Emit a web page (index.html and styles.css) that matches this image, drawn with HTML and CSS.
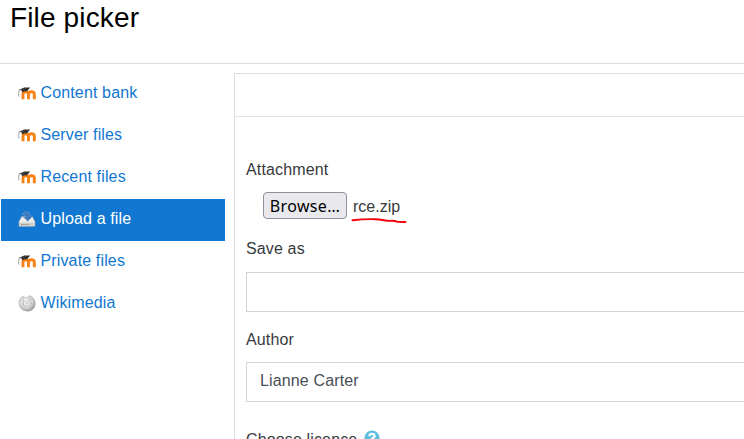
FILE: index.html
```html
<!DOCTYPE html>
<html lang="en">
<head>
<meta charset="utf-8">
<title>File picker</title>
<link rel="stylesheet" href="styles.css">
</head>
<body>
<svg width="0" height="0" class="defs" aria-hidden="true">
  <symbol id="moodle" viewBox="0 0 18 14">
    <path d="M5 13.300V8.200Q5 5.800 7.700 5.800T10.500 8.200V13.300M10.500 8.200Q10.500 5.800 13.500 5.800T16.300 8.200V13.300" fill="none" stroke="#f98012" stroke-width="2.900"/>
    <path d="M1 3.700 6.200 1.600 12.200 1.400 8.900 5.600Q6.200 4.700 4.200 6.600L3.400 4.300Z" fill="#333"/>
    <path d="M5.500 2.800 1.100 4.200Q.4 7 .8 10.500" fill="none" stroke="#666" stroke-width=".6"/>
  </symbol>
</svg>
<header class="header"><h1 class="title">File picker</h1></header>
<main class="picker">
  <nav class="repos">
    <a class="repo"><svg class="icon"><use href="#moodle"/></svg><span>Content bank</span></a>
    <a class="repo"><svg class="icon"><use href="#moodle"/></svg><span>Server files</span></a>
    <a class="repo"><svg class="icon"><use href="#moodle"/></svg><span>Recent files</span></a>
    <a class="repo active"><svg class="icon upload" viewBox="0 0 18 18">
      <path d="M3.800 6.500h10.400l2.700 5v4.800H1v-4.800Z" fill="#eeeeec" stroke="#a5aaa3" stroke-width=".6"/>
      <path d="M1.300 12.500h15.300v3.600H1.300Z" fill="#cfd1cc"/>
      <path d="M3 14.500h8.500" stroke="#888a85" stroke-width="1" stroke-dasharray="1 .7"/>
      <path d="M4.300 4.500Q5 1.500 8.500 1.700 12.200 2.100 12.300 6h2.500L9.800 11.300 5.200 6.700h2.800Q7.800 4 4.300 4.500Z" fill="#3f78bd" stroke="#6c9bd0" stroke-width=".6"/>
    </svg><span>Upload a file</span></a>
    <a class="repo"><svg class="icon"><use href="#moodle"/></svg><span>Private files</span></a>
    <a class="repo"><svg class="icon globe" viewBox="0 0 18 18">
      <defs><radialGradient id="ball" cx=".42" cy=".38" r=".65"><stop offset="0" stop-color="#f5f5f5"/><stop offset=".65" stop-color="#d5d5d5"/><stop offset="1" stop-color="#8c8c8c"/></radialGradient></defs>
      <path d="M5.500 2Q6 4 8 3.500 9.500 4 11 1.600 14 2 16 5 18 9 16.800 12.500 14.500 17.200 9.500 17.200 4 17 1.600 12.500-.5 7 3 3.500Z" fill="url(#ball)" stroke="#aaa" stroke-width=".5"/>
      <path d="M1.500 7Q4 5.500 6 7t4-.6 6.500.2M2 12Q5 10 7.500 12t4.500-.3 4.500.5M5.500 3Q4.500 9 7 16.500M11 2.500Q13.500 9 11.500 16.500" fill="none" stroke="#bdbdbd" stroke-width=".6"/>
      <path d="M4.500 8.500 5.600 10.500M9 8v2M13 8.500l1 1.500" stroke="#999" stroke-width=".6"/>
    </svg><span>Wikimedia</span></a>
  </nav>
  <section class="panel">
    <div class="toolbar"></div>
    <form class="form">
      <label class="label">Attachment</label>
      <div class="file">
        <button class="browse" type="button">Browse…</button>
        <span class="filename">rce.zip<svg class="mark" viewBox="0 0 60 10"><path d="M1.500 4.200Q12 3 24 3.200C32 3.500 34 5 39 4.900Q43 4.400 46 5.700L54.500 6" fill="none" stroke="#f5000c" stroke-width="1.900" stroke-linecap="round"/></svg></span>
      </div>
      <label class="label save">Save as</label>
      <input class="field" type="text">
      <label class="label author">Author</label>
      <input class="field named" type="text" value="Lianne Carter">
      <div class="label licence"><span>Choose licence</span><svg class="help" viewBox="0 0 16 16"><circle cx="8" cy="8" r="7.600" fill="#5bc0de"/><path d="M5.300 6.100Q5.600 3.800 8 3.800T10.600 6.100Q10.600 7.300 9 8T8 9.600" fill="none" stroke="#fff" stroke-width="2.200"/><path d="M7 11h2v2H7Z" fill="#fff"/></svg></div>
    </form>
  </section>
</main>
</body>
</html>
```
FILE: styles.css
```css
* { box-sizing: border-box; }
html, body { height: 100%; }
body {
  margin: 0;
  display: flex;
  flex-direction: column;
  overflow: hidden;
  background: #fff;
  color: #373a3c;
  font: 16px/24px "Liberation Sans", Arial, sans-serif;
  letter-spacing: .14px;
}
.defs { position: absolute; }
.header {
  flex: 0 0 64px;
  padding-left: 10px;
  border-bottom: 1px solid #dedede;
}
.title { margin: 0; padding-top: 1px; font-size: 28px; font-weight: 400; line-height: 34px; color: #000; }
.picker { display: flex; flex: 1; min-height: 0; padding-top: 9px; }
.repos { flex: 0 0 234px; padding: 0 9px 0 1px; }
.repo {
  display: flex;
  height: 42px;
  padding: 8px 0 0 17px;
  color: #1177d1;
}
.icon { width: 18px; height: 14px; margin: 5px 4.500px 0 0; }
.upload, .globe { height: 18px; margin-top: 3px; }
.active { background: #1177d1; color: #fff; }
.panel { flex: 1; border-top: 1px solid #dedede; border-left: 1px solid #dedede; }
.toolbar { height: 43px; border-bottom: 1px solid #e2e2e2; }
.form { display: flex; flex-direction: column; padding: 41px 0 0 11px; }
.label { display: block; height: 24px; }
.file { display: flex; margin: 10px 0 0 17px; height: 27px; }
.browse {
  width: 84px;
  height: 27px;
  padding: 0;
  border: 1px solid #8f8f9d;
  border-radius: 4px;
  background: #e9e9ed;
  color: #000;
  font: 16px/24px "Noto Sans", sans-serif;
  letter-spacing: .35px;
}
.filename { position: relative; margin: 3px 0 0 6px; letter-spacing: 0; }
.mark { position: absolute; left: -2px; top: 21px; width: 60px; height: 10px; }
.save { margin-top: 18px; }
.field {
  height: 40px;
  margin: 11px -1px 0 0;
  padding: 0 13px 3px;
  border: 1px solid #ced4da;
  border-radius: 0;
  background: #fff;
  color: #495057;
  font: inherit;
  letter-spacing: .14px;
}
.author { margin-top: 16px; }
.named { margin-top: 10px; }
.licence { display: flex; margin-top: 26px; }
.help { width: 16px; height: 16px; margin: 2px 0 0 7px; }
```
